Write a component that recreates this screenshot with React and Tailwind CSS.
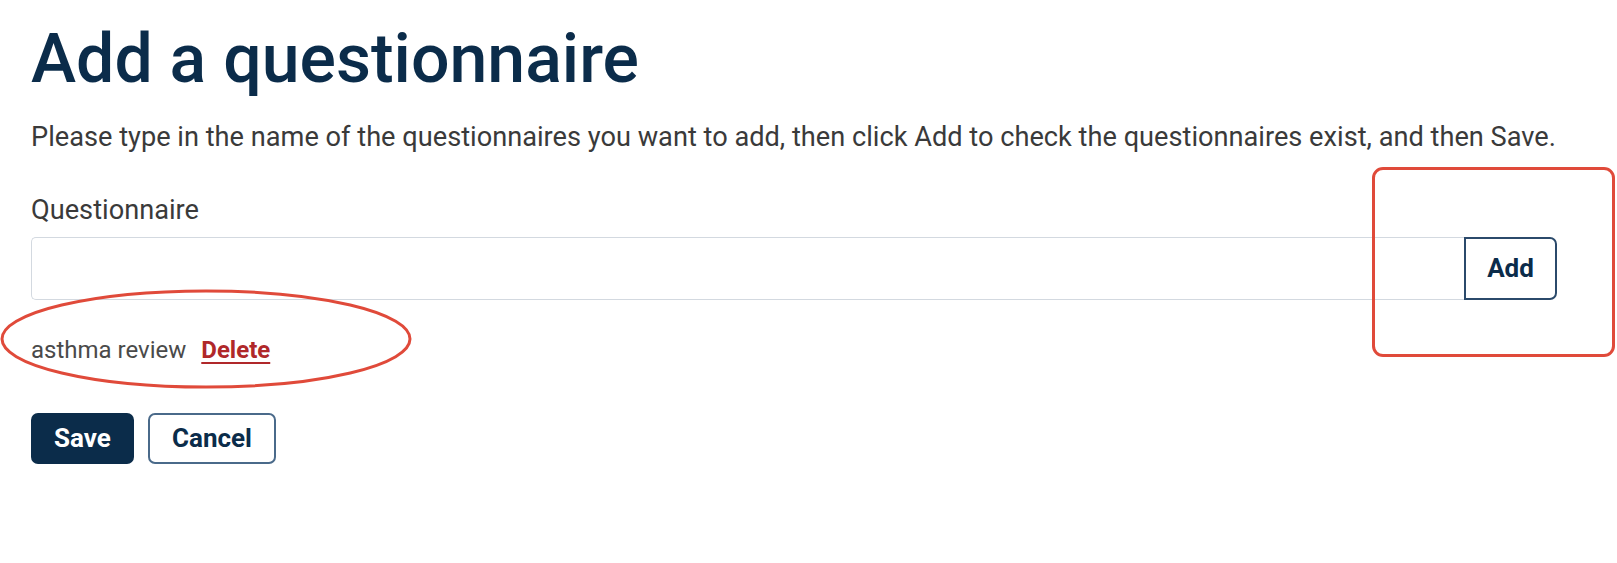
export default function App() {
  return (
    <div className="relative w-[1617px] h-[563px] bg-white overflow-hidden" style={{ fontFamily: "Roboto, 'Liberation Sans', sans-serif" }}>
      <div className="pl-[31px] pr-[40px] pt-[25px]">
        <h1 className="text-[68px] leading-[68px] font-medium text-[#0b2c4a]">Add a questionnaire</h1>
        <p className="mt-[28px] text-[27.2px] leading-[32px] text-[#3a3a3a] whitespace-nowrap">
          Please type in the name of the questionnaires you want to add, then click Add to check the questionnaires exist, and then Save.
        </p>
        <label className="block mt-[41px] text-[27.2px] leading-[32px] text-[#3a3a3a]">Questionnaire</label>
        <div className="mt-[11px] flex w-[1526px] h-[63px]">
          <input className="flex-1 h-full border border-[#d3d9e0] border-r-0 rounded-l-[5px] outline-none px-3 text-[24px]" />
          <button className="w-[93px] h-full border-2 border-[#2b4a6b] rounded-r-[7px] text-[26px] font-bold text-[#0b2c4a] bg-white">Add</button>
        </div>
        <div className="mt-[36px] flex items-baseline gap-[15px] leading-[28px]">
          <span className="text-[24px] text-[#4a4a4a]">asthma review</span>
          <a href="#" className="text-[24px] font-bold text-[#b0282a] underline underline-offset-[4px] decoration-2">Delete</a>
        </div>
        <div className="mt-[49px] flex gap-[14px]">
          <button className="w-[103px] h-[51px] rounded-[7px] bg-[#0b2c4a] text-white text-[26px] font-bold">Save</button>
          <button className="w-[128px] h-[51px] rounded-[7px] border-2 border-[#4a6a8a] bg-white text-[#0b2c4a] text-[26px] font-bold">Cancel</button>
        </div>
      </div>
      <div className="absolute left-[1372px] top-[167px] w-[243px] h-[190px] border-[3px] border-[#e04a3a] rounded-[11px] pointer-events-none" />
      <svg className="absolute left-[-1px] top-[288px] pointer-events-none" width="414" height="102" viewBox="0 0 414 102">
        <ellipse cx="207" cy="51" rx="204" ry="48" fill="none" stroke="#e04a3a" strokeWidth="3" />
      </svg>
    </div>
  );
}
